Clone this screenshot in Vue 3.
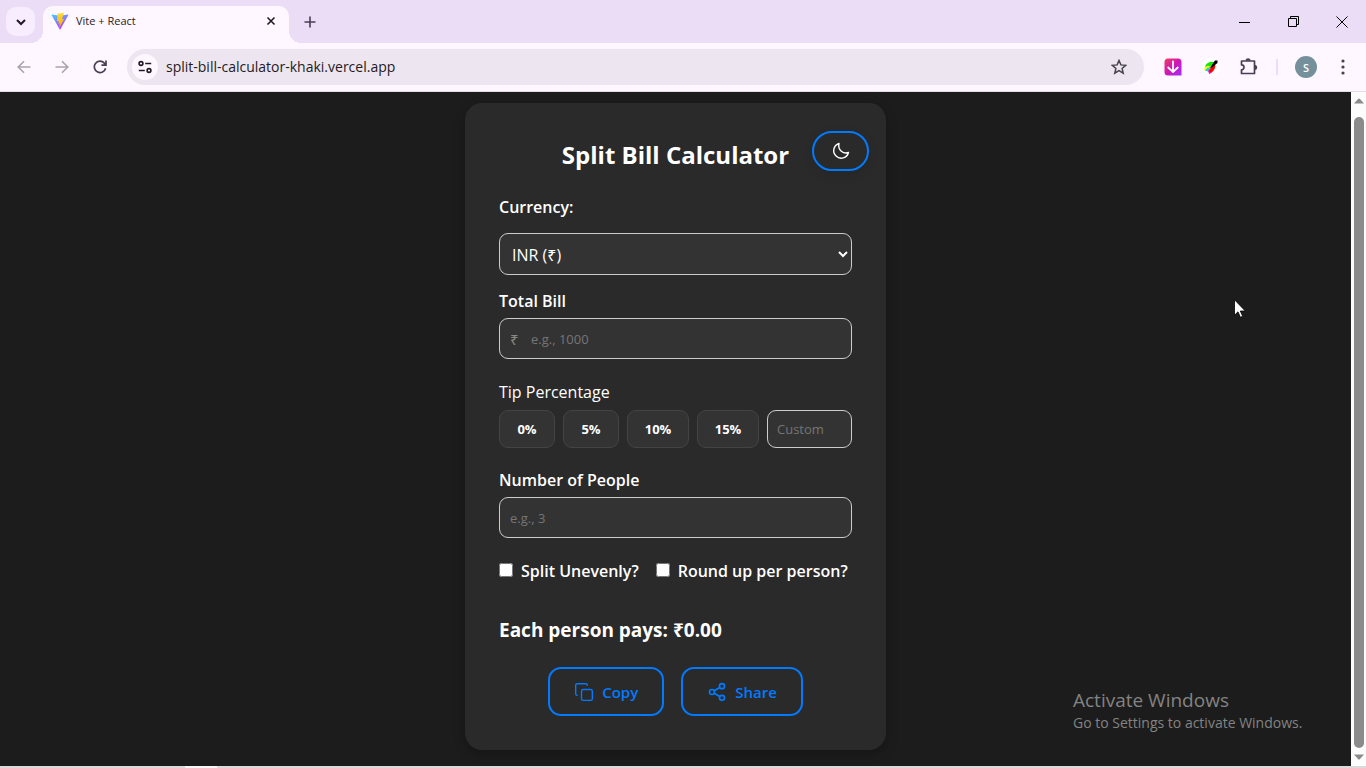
<script setup>
import { computed, ref } from 'vue'

const currencies = [
  { code: 'INR', symbol: '₹' },
  { code: 'USD', symbol: '$' },
  { code: 'EUR', symbol: '€' },
]
const currency = ref('INR')
const bill = ref('')
const tip = ref(0)
const customTip = ref('')
const people = ref('')
const uneven = ref(false)
const roundUp = ref(false)
const tips = [0, 5, 10, 15]

const symbol = computed(() => currencies.find((c) => c.code === currency.value).symbol)
const share = computed(() => {
  const count = Number(people.value)
  if (!count) return '0.00'
  const rate = Number(customTip.value || tip.value)
  const each = (Number(bill.value) * (1 + rate / 100)) / count
  return (roundUp.value ? Math.ceil(each) : each).toFixed(2)
})
</script>

<template>
  <div class="window">
    <header class="tabstrip">
      <button class="tab-search" aria-label="Search tabs">
        <svg width="12" height="12" viewBox="0 0 12 12" fill="none" stroke="#1f1a24" stroke-width="2"><path d="M2 4l4 4 4-4" /></svg>
      </button>
      <div class="tab">
        <svg class="favicon" width="18" height="18" viewBox="0 0 18 18">
          <defs>
            <linearGradient id="shield" x1="0" y1="0" x2="0.6" y2="1"><stop offset="0" stop-color="#41d1ff" /><stop offset="1" stop-color="#bd34fe" /></linearGradient>
            <linearGradient id="bolt" x1="0" y1="0" x2="0" y2="1"><stop offset="0" stop-color="#ffdd35" /><stop offset="1" stop-color="#ffa800" /></linearGradient>
          </defs>
          <path d="M17.4 3.1L9.4 17.3q-.4.6-.8 0L.5 3.1q-.3-.7.5-.7l8 1.4 7.900-1.400q.8 0 .5.7z" fill="url(#shield)" />
          <path d="M13 .7L6.500 1.800l-.5 7.500 2-.4-.6 2.800 1.500-.4-.8 4.400 5-8.700-2.200.3z" fill="url(#bolt)" />
        </svg>
        <span class="tab-title">Vite + React</span>
        <button class="tab-close" aria-label="Close tab">
          <svg width="10" height="10" viewBox="0 0 10 10" stroke="#1f1a24" stroke-width="1.600"><path d="M1.500 1.500l7 7M8.500 1.500l-7 7" /></svg>
        </button>
      </div>
      <button class="new-tab" aria-label="New tab">
        <svg width="12" height="12" viewBox="0 0 12 12" stroke="#4a3f52" stroke-width="1.600"><path d="M6 .5v11M.5 6h11" /></svg>
      </button>
      <div class="window-controls">
        <button aria-label="Minimize"><svg width="12" height="12" viewBox="0 0 12 12" stroke="#000"><path d="M1 6.500h11" /></svg></button>
        <button aria-label="Restore"><svg width="12" height="12" viewBox="0 0 12 12" fill="none" stroke="#000"><path d="M1.500 2.500h8v8h-8zM3.500 2.500v-2h8v8h-2" /></svg></button>
        <button aria-label="Close"><svg width="12" height="12" viewBox="0 0 12 12" stroke="#000"><path d="M.5.5l11 11M11.500.5l-11 11" /></svg></button>
      </div>
    </header>

    <nav class="toolbar">
      <button class="nav-button" aria-label="Back">
        <svg width="14" height="14" viewBox="0 0 14 14" fill="none" stroke="#aaa3ad" stroke-width="1.600"><path d="M13.500 7H1.500M7 1.200L1.200 7 7 12.800" /></svg>
      </button>
      <button class="nav-button" aria-label="Forward">
        <svg width="14" height="14" viewBox="0 0 14 14" fill="none" stroke="#aaa3ad" stroke-width="1.600"><path d="M.5 7h12M7 1.200L12.800 7 7 12.800" /></svg>
      </button>
      <button class="nav-button" aria-label="Reload">
        <svg width="14" height="14" viewBox="0 0 14 14" fill="none" stroke="#4a3f52" stroke-width="1.700"><path d="M12.600 8.200a5.700 5.700 0 1 1-1.300-5.100L13 4.900M13 .5v4.600H8.400" /></svg>
      </button>
      <div class="address">
        <button class="site-info" aria-label="Site information">
          <svg width="14" height="14" viewBox="0 0 14 14" fill="none" stroke="#1f1a24" stroke-width="1.600"><circle cx="3" cy="3.500" r="1.900" /><path d="M7.200 3.500h6M.8 10.500h6" /><circle cx="11" cy="10.500" r="1.900" /></svg>
        </button>
        <input class="url" aria-label="Address" value="split-bill-calculator-khaki.vercel.app" />
        <button class="bookmark" aria-label="Bookmark">
          <svg width="16" height="16" viewBox="0 0 16 16" fill="none" stroke="#47434a" stroke-width="1.500"><path d="M8 1.500l1.900 4.400 4.800.4-3.600 3.100 1.100 4.700L8 11.600l-4.200 2.500 1.100-4.700L1.300 6.300l4.800-.4z" /></svg>
        </button>
      </div>
      <button class="extension" aria-label="Downloader">
        <svg width="18" height="18" viewBox="0 0 18 18">
          <defs><linearGradient id="dl" x1="0" y1="0" x2="1" y2="1"><stop offset="0" stop-color="#f23c65" /><stop offset=".5" stop-color="#cc18b4" /><stop offset="1" stop-color="#a42cff" /></linearGradient></defs>
          <path d="M4 .5h10a3.500 3.500 0 0 1 3.500 3.500v13.500H4A3.500 3.500 0 0 1 .5 14V4A3.500 3.500 0 0 1 4 .5z" fill="url(#dl)" />
          <path d="M9 3.500v10M4.200 9.500L9 14l4.800-4.500" fill="none" stroke="#fff" stroke-width="1.800" stroke-linecap="round" />
        </svg>
      </button>
      <button class="extension" aria-label="Color picker">
        <svg width="18" height="18" viewBox="0 0 18 18">
          <circle cx="9" cy="9" r="9" fill="#fff" />
          <path d="M12.500 4.500C8 2.500 4 5.500 3 9l5.500 0z" fill="#19e600" />
          <path d="M3 9C1.800 11 2 12.500 3 12.800L8.500 8.800 6 7.800z" fill="#ff0" />
          <path d="M3 12.800L6 13.500l3-4.700L5 10z" fill="#18d7d0" />
          <path d="M6 13.200L7.500 16.500 9.500 14l1-5z" fill="#f0f" />
          <path d="M13 5.500c1 4-.7 7-4 9.500L6.500 12.500z" fill="#f00" />
          <path d="M11.500 4.500L13 2.500h2.500V5l-2 1.500C12 8.500 9.500 9.800 7.800 10.500z" fill="#000" />
        </svg>
      </button>
      <button class="extension" aria-label="Extensions">
        <svg width="18" height="18" viewBox="0 0 18 18" fill="none" stroke="#4a3f52" stroke-width="1.700" stroke-linejoin="round"><path d="M1.500 3h13v12.500h-13v-3.700a2.500 2.500 0 0 0 0-5z" /><path d="M6.200 2.500a1.900 1.900 0 0 1 3.700 0M15 7.700a1.800 1.800 0 0 1 0 3.500" fill="#4a3f52" /></svg>
      </button>
      <span class="divider"></span>
      <button class="avatar" aria-label="Profile">S</button>
      <button class="menu" aria-label="Browser menu">
        <svg width="4" height="16" viewBox="0 0 4 16" fill="#4a3f52"><circle cx="2" cy="2" r="1.600" /><circle cx="2" cy="8" r="1.600" /><circle cx="2" cy="14" r="1.600" /></svg>
      </button>
    </nav>

    <div class="viewport">
      <main class="page">
        <section class="card">
          <div class="card-head">
            <h1>Split Bill Calculator</h1>
            <button class="theme" aria-label="Toggle theme">
              <svg width="18" height="18" viewBox="0 0 18 18" fill="none" stroke="#fff" stroke-width="1.400" stroke-linejoin="round"><path d="M7 1.500A7.500 7.500 0 1 0 16.500 10.500C11.500 12.500 5.500 8 7 1.500z" /></svg>
            </button>
          </div>

          <label class="label" for="currency">Currency:</label>
          <select id="currency" v-model="currency" class="field currency">
            <option v-for="c in currencies" :key="c.code" :value="c.code">{{ c.code }} ({{ c.symbol }})</option>
          </select>

          <label class="label" for="bill">Total Bill</label>
          <div class="field money">
            <span class="symbol">{{ symbol }}</span>
            <input id="bill" v-model="bill" inputmode="decimal" placeholder="e.g., 1000" />
          </div>

          <div id="tip-label" class="label tip-label">Tip Percentage</div>
          <div class="tips" role="group" aria-labelledby="tip-label">
            <button v-for="t in tips" :key="t" class="tip" @click="tip = t">{{ t }}%</button>
            <input v-model="customTip" class="field custom" aria-label="Custom tip" placeholder="Custom" />
          </div>

          <label class="label people-label" for="people">Number of People</label>
          <input id="people" v-model="people" class="field people" inputmode="numeric" placeholder="e.g., 3" />

          <div class="checks">
            <label><input v-model="uneven" type="checkbox" />Split Unevenly?</label>
            <label><input v-model="roundUp" type="checkbox" />Round up per person?</label>
          </div>

          <h2>Each person pays: {{ symbol }}{{ share }}</h2>

          <div class="actions">
            <button>
              <svg width="20" height="20" viewBox="0 0 24 24" fill="none" stroke="#007bff" stroke-width="1.700" stroke-linecap="round" stroke-linejoin="round"><rect x="9" y="9" width="13" height="13" rx="2" /><path d="M4 16a2 2 0 0 1-2-2V4a2 2 0 0 1 2-2h10a2 2 0 0 1 2 2" /></svg>
              Copy
            </button>
            <button>
              <svg width="20" height="20" viewBox="0 0 24 24" fill="none" stroke="#007bff" stroke-width="2"><circle cx="18" cy="5" r="3" /><circle cx="6" cy="12" r="3" /><circle cx="18" cy="19" r="3" /><path d="M8.600 13.500l6.800 4M15.400 6.500l-6.800 4" /></svg>
              Share
            </button>
          </div>
        </section>
      </main>

      <div class="scrollbar">
        <svg width="10" height="6" viewBox="0 0 10 6" fill="#8b8b8b"><path d="M0 5.500L4 1q1-1 2 0l4 4.500z" /></svg>
        <span class="thumb"></span>
        <svg width="10" height="6" viewBox="0 0 10 6" fill="#8b8b8b"><path d="M0 .5L4 5q1 1 2 0L10 .5z" /></svg>
      </div>

      <aside class="watermark">
        <p class="watermark-title">Activate Windows</p>
        <p>Go to Settings to activate Windows.</p>
      </aside>
      <svg class="pointer" width="12" height="19" viewBox="0 0 12 19"><path d="M.5.8v15.400l3.500-3.400 2.400 5.500 2.300-1-2.400-5.300h5z" fill="#fff" stroke="#000" stroke-width=".8" /></svg>
    </div>
    <footer class="taskbar"><span></span></footer>
  </div>
</template>

<style>
body {
  background: #1c1c1c;
}
</style>

<style scoped>
* {
  box-sizing: border-box;
}
.window {
  display: flex;
  flex-direction: column;
  min-height: 100vh;
  font-family: "Open Sans", "Noto Sans", sans-serif;
}
button,
input,
select {
  font-family: inherit;
  margin: 0;
}
button {
  display: flex;
  align-items: center;
  justify-content: center;
  padding: 0;
  border: 0;
  background: none;
}
svg {
  display: block;
  flex: none;
}

.tabstrip {
  display: flex;
  align-items: center;
  height: 43px;
  padding-left: 6px;
  background: #eaddf5;
}
.tab-search {
  width: 29px;
  height: 29px;
  border-radius: 10px;
  background: #f8edff;
}
.tab {
  position: relative;
  display: flex;
  align-items: center;
  align-self: flex-end;
  width: 246px;
  height: 37px;
  margin-left: 8px;
  padding: 0 13px 8px 8px;
  border-radius: 10px 10px 0 0;
  background: #fef7ff;
}
.tab::before,
.tab::after {
  content: "";
  position: absolute;
  bottom: 0;
  width: 12px;
  height: 12px;
}
.tab::before {
  right: 100%;
  background: radial-gradient(circle at 0 0, transparent 12px, #fef7ff 12px);
}
.tab::after {
  left: 100%;
  background: radial-gradient(circle at 100% 0, transparent 12px, #fef7ff 12px);
}
.tab-title {
  flex: 1;
  margin-left: 7px;
  font-size: 11px;
  color: #1f1a24;
}
.new-tab {
  margin-left: 15px;
}
.window-controls {
  display: flex;
  margin-left: auto;
}
.window-controls button {
  width: 49px;
  height: 43px;
}

.toolbar {
  display: flex;
  align-items: center;
  height: 49px;
  padding: 0 15px 0 5px;
  border-bottom: 1px solid #e5dce8;
  background: #fef7ff;
}
.nav-button {
  width: 38px;
  height: 34px;
}
.address {
  display: flex;
  align-items: center;
  flex: 1;
  height: 36px;
  margin-left: 8px;
  padding: 0 17px 0 5px;
  border-radius: 18px;
  background: #ede6f0;
}
.site-info {
  width: 26px;
  height: 26px;
  border-radius: 50%;
  background: #fef7ff;
}
.url {
  flex: 1;
  margin-left: 8px;
  padding: 0 0 2px;
  border: 0;
  outline: 0;
  background: none;
  font-size: 14px;
  color: #1f1a24;
}
.extension {
  margin-left: 20px;
}
.divider {
  width: 2px;
  height: 16px;
  margin-left: 18px;
  background: #eaddf9;
}
.avatar {
  width: 22px;
  height: 22px;
  margin-left: 17px;
  border-radius: 50%;
  background: #76909b;
  color: #fff;
  font-size: 11px;
  font-weight: 600;
}
.menu {
  width: 16px;
  margin-left: 18px;
}

.viewport {
  position: relative;
  display: flex;
  flex: 1;
  background: #1c1c1c;
}
.page {
  display: flex;
  flex: 1;
  align-items: flex-start;
  justify-content: center;
  padding: 11px 16px 16px;
}
.card {
  width: 100%;
  max-width: 421px;
  padding: 28px 34px 34px;
  border-radius: 17px;
  background: #2a2a2a;
  box-shadow: 0 4px 12px rgba(0, 0, 0, 0.25);
  color: #fff;
}
.card-head {
  display: grid;
  grid-template-columns: 1fr auto 1fr;
  margin: 0 -17px 24px;
}
h1 {
  grid-column: 2;
  margin: 0;
  font-size: 24px;
  line-height: 48px;
  height: 40px;
  white-space: nowrap;
}
.theme {
  justify-self: end;
  width: 57px;
  height: 40px;
  border: 2px solid #007bff;
  border-radius: 20px;
  box-shadow: 0 4px 12px rgba(0, 0, 0, 0.1);
}
.label {
  display: block;
  margin-bottom: 5px;
  font-size: 16px;
  line-height: 24px;
  font-weight: 600;
}
.field {
  display: block;
  width: 100%;
  height: 41px;
  border: 1px solid #ccc;
  border-radius: 9px;
  background: #333;
  color: #fff;
  font-size: 13px;
}
.currency {
  height: 42px;
  margin: 14px 0;
  padding: 2px 1px 0 8px;
  font-size: 16px;
}
.money {
  display: flex;
  align-items: center;
  padding: 0 10px;
}
.symbol {
  width: 21px;
  color: #888;
  font-size: 15px;
}
.money input {
  flex: 1;
  min-width: 0;
  padding: 0;
  border: 0;
  outline: 0;
  background: none;
  color: #fff;
  font-size: 13px;
}
input::placeholder {
  color: #757575;
}
.tip-label {
  margin: 21px 0 6px;
  font-weight: 400;
}
.tips {
  display: flex;
  gap: 8px;
}
.tip {
  flex: none;
  width: 56px;
  height: 38px;
  border: 1px solid #444;
  border-radius: 9px;
  background: #333;
  color: #fff;
  font-size: 13px;
  font-weight: 700;
}
.tip:nth-child(n + 3) {
  width: 62px;
}
.custom {
  flex: 1;
  min-width: 0;
  height: 38px;
  padding: 0 9px;
}
.people-label {
  margin-top: 20px;
}
.people {
  padding: 0 10px;
}
.checks {
  display: flex;
  gap: 17px;
  margin-top: 21px;
  font-size: 16px;
  line-height: 24px;
  font-weight: 600;
  white-space: nowrap;
}
.checks label {
  display: flex;
  align-items: center;
}
.checks input {
  width: 14px;
  height: 14px;
  margin: 0 8px 2px 0;
}
h2 {
  margin: 33px 0 23px;
  font-size: 19px;
  line-height: 28px;
}
.actions {
  display: flex;
  justify-content: center;
  gap: 17px;
}
.actions button {
  gap: 8px;
  height: 49px;
  padding: 0 24px;
  border: 2px solid #007bff;
  border-radius: 13px;
  color: #007bff;
  font-size: 15px;
  font-weight: 600;
}

.scrollbar {
  display: flex;
  flex-direction: column;
  align-items: center;
  width: 15px;
  padding: 6px 0;
  background: #fcfcfc;
}
.thumb {
  flex: 1;
  width: 10px;
  margin: 13px 0 6px;
  border-radius: 5px;
  background: #8b8b8b;
}
.watermark {
  position: absolute;
  right: 57px;
  bottom: 33px;
  width: 236px;
  color: #838383;
  font-size: 14px;
  line-height: 20px;
}
.watermark p {
  margin: 0;
}
.watermark .watermark-title {
  font-size: 19px;
  line-height: 26px;
}
.pointer {
  position: absolute;
  top: 207px;
  right: 120px;
}
.taskbar {
  height: 2px;
  background: #dadada;
}
.taskbar span {
  display: block;
  width: 32px;
  height: 2px;
  margin-left: 185px;
  background: #f6f6f6;
}
</style>
